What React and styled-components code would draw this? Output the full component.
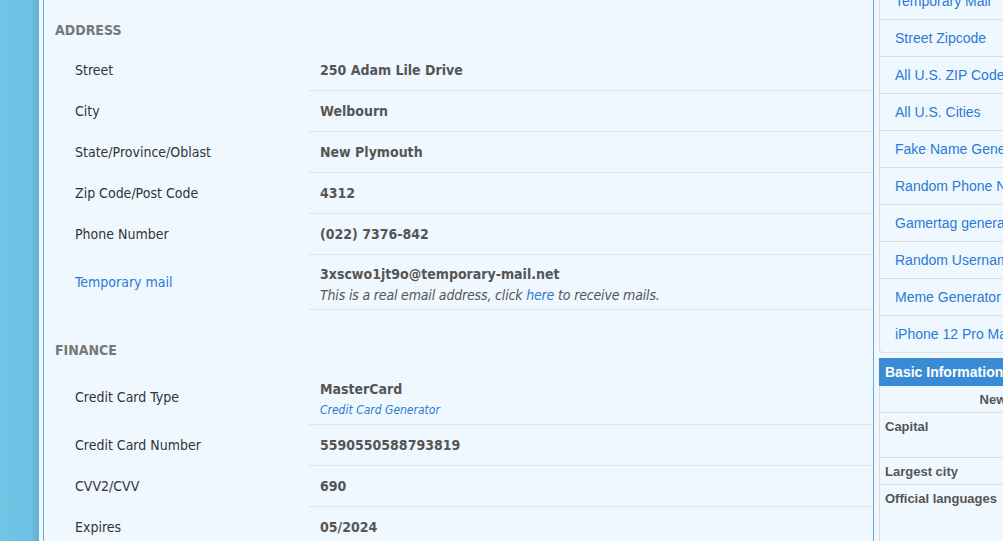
import styled, { createGlobalStyle } from "styled-components";

const GlobalStyle = createGlobalStyle`
  html, body {
    margin: 0;
    padding: 0;
    background: #6fc2e3;
    overflow: hidden;
  }
`;

const address = [
  { label: "Street", value: "250 Adam Lile Drive" },
  { label: "City", value: "Welbourn" },
  { label: "State/Province/Oblast", value: "New Plymouth" },
  { label: "Zip Code/Post Code", value: "4312" },
  { label: "Phone Number", value: "(022) 7376-842" },
];

const finance = [
  { label: "Credit Card Number", value: "5590550588793819" },
  { label: "CVV2/CVV", value: "690" },
  { label: "Expires", value: "05/2024" },
];

const tools = [
  "Temporary Mail",
  "Street Zipcode",
  "All U.S. ZIP Codes",
  "All U.S. Cities",
  "Fake Name Generator",
  "Random Phone Numbers",
  "Gamertag generator",
  "Random Username Generator",
  "Meme Generator",
  "iPhone 12 Pro Max Mockup",
];

export default function App() {
  return (
    <>
      <GlobalStyle />
      <Page>
        <Gutter />
        <Wrap>
          <Main>
            <Scroll>
              <SectionTitle>Address</SectionTitle>
              <Table>
                <tbody>
                  {address.map((r) => (
                    <tr key={r.label}>
                      <Label>{r.label}</Label>
                      <Value>{r.value}</Value>
                    </tr>
                  ))}
                  <tr>
                    <Label>
                      <Link href="#">Temporary mail</Link>
                    </Label>
                    <Value $tall>
                      <div>3xscwo1jt9o@temporary-mail.net</div>
                      <Note>
                        This is a real email address, click{" "}
                        <Link href="#">here</Link> to receive mails.
                      </Note>
                    </Value>
                  </tr>
                </tbody>
              </Table>

              <SectionTitle>Finance</SectionTitle>
              <Table>
                <tbody>
                  <tr>
                    <Label>Credit Card Type</Label>
                    <Value $tall>
                      <div>MasterCard</div>
                      <SmallLink href="#">Credit Card Generator</SmallLink>
                    </Value>
                  </tr>
                  {finance.map((r) => (
                    <tr key={r.label}>
                      <Label>{r.label}</Label>
                      <Value>{r.value}</Value>
                    </tr>
                  ))}
                </tbody>
              </Table>
            </Scroll>
          </Main>

          <Sidebar>
            <ToolList>
              {tools.map((t) => (
                <ToolItem key={t} href="#">
                  {t}
                </ToolItem>
              ))}
            </ToolList>

            <InfoTable>
              <thead>
                <tr>
                  <InfoHead colSpan={2}>Basic Information</InfoHead>
                </tr>
              </thead>
              <tbody>
                <tr>
                  <InfoCell colSpan={2} $center>
                    New Zealand
                  </InfoCell>
                </tr>
                <tr>
                  <InfoCell $h={45}>Capital</InfoCell>
                  <InfoCell $h={45} />
                </tr>
                <tr>
                  <InfoCell>Largest city</InfoCell>
                  <InfoCell />
                </tr>
                <tr>
                  <InfoCell $h={70}>Official languages</InfoCell>
                  <InfoCell $h={70} />
                </tr>
              </tbody>
            </InfoTable>
          </Sidebar>
        </Wrap>
      </Page>
    </>
  );
}

const Page = styled.div`
  display: flex;
  height: 541px;
  overflow: hidden;
`;

const Gutter = styled.div`
  width: 39px;
  flex-shrink: 0;
  background: linear-gradient(to right, #71c4e4 0, #6fc2e3 30px, #62aecd 39px);
`;

const Wrap = styled.div`
  flex: 1;
  display: flex;
  align-items: flex-start;
  gap: 5px;
  padding-left: 4px;
  background: #f0f8ff;
  overflow: hidden;
`;

const Main = styled.div`
  width: 831px;
  flex-shrink: 0;
  box-sizing: border-box;
  height: 541px;
  border-left: 1px solid #6aa8dc;
  border-right: 1px solid #6aa8dc;
  padding-left: 11px;
  font-family: "DejaVu Sans", Tahoma, sans-serif;
  font-stretch: condensed;
  font-size: 14px;
  color: #333;
  overflow: hidden;
`;

const Scroll = styled.div`
  margin-top: -10px;
`;

const SectionTitle = styled.h3`
  margin: 0;
  padding: 31px 0 11px;
  line-height: 18px;
  font-size: 14px;
  font-weight: bold;
  text-transform: uppercase;
  color: #777;
`;

const Table = styled.table`
  width: 100%;
  border-collapse: collapse;
`;

const Label = styled.td`
  width: 234px;
  padding: 0 0 0 20px;
  height: 40px;
  vertical-align: middle;
  color: #333;
`;

const Value = styled.td`
  height: ${(p) => (p.$tall ? "42px" : "40px")};
  padding: ${(p) => (p.$tall ? "9px 11px 3px" : "0 11px")};
  line-height: ${(p) => (p.$tall ? "21px" : "normal")};
  border-bottom: 1px solid #e3e3e3;
  font-weight: bold;
  color: #555;
  vertical-align: ${(p) => (p.$tall ? "top" : "middle")};
`;

const Note = styled.div`
  font-weight: normal;
  font-style: italic;
  letter-spacing: -0.17px;
  color: #555;
`;

const Link = styled.a`
  color: #2a7ad6;
  text-decoration: none;
  font-weight: normal;
`;

const SmallLink = styled.a`
  display: block;
  font-size: 12px;
  font-weight: normal;
  font-style: italic;
  color: #2a7ad6;
  text-decoration: none;
`;

const Sidebar = styled.div`
  width: 280px;
  flex-shrink: 0;
  margin-top: -18px;
  font-family: "Liberation Sans", Arial, sans-serif;
`;

const ToolList = styled.div`
  display: flex;
  flex-direction: column;
  border-radius: 4px;
  border: 1px solid #ddd;
  border-top: 0;
  overflow: hidden;
`;

const ToolItem = styled.a`
  display: block;
  height: 36px;
  line-height: 36px;
  padding: 0 15px;
  border-top: 1px solid #ddd;
  font-size: 14px;
  color: #2a7ad6;
  text-decoration: none;
  white-space: nowrap;
`;

const InfoTable = styled.table`
  width: 100%;
  margin-top: 5px;
  border-collapse: collapse;
  font-size: 13px;
  color: #555;
`;

const InfoHead = styled.th`
  height: 26px;
  padding: 0 5px;
  background: #3a8bd6;
  color: #fff;
  font-size: 14px;
  text-align: left;
  border: 1px solid #3a8bd6;
`;

const InfoCell = styled.td`
  height: ${(p) => (p.$h ? `${p.$h}px` : "27px")};
  padding: ${(p) => (p.$h ? "6px 5px" : "0 5px")};
  vertical-align: ${(p) => (p.$h ? "top" : "middle")};
  text-align: ${(p) => (p.$center ? "center" : "left")};
  font-weight: bold;
  border: 1px solid #ddd;
  border-right: 0;
  box-sizing: border-box;
`;
